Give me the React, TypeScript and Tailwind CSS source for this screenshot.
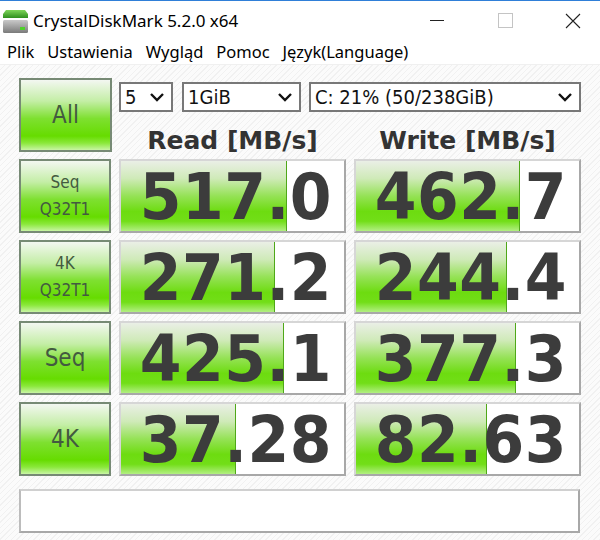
const readRows = [
  { label: ["Seq", "Q32T1"], read: "517.0", readBar: 166, write: "462.7", writeBar: 164 },
  { label: ["4K", "Q32T1"], read: "271.2", readBar: 154, write: "244.4", writeBar: 151 },
  { label: ["Seq"], read: "425.1", readBar: 163, write: "377.3", writeBar: 160 },
  { label: ["4K"], read: "37.28", readBar: 115, write: "82.63", writeBar: 131 },
]

const cond = "font-['DejaVu_Sans_Condensed','DejaVu_Sans',sans-serif] [font-stretch:condensed]"

function DriveIcon() {
  return (
    <svg width="25" height="23" viewBox="0 0 25 23">
      <defs>
        <linearGradient id="lid" x1="0" y1="0" x2="0" y2="1">
          <stop offset="0" stopColor="#7fd65a" />
          <stop offset="1" stopColor="#2f8f1e" />
        </linearGradient>
        <linearGradient id="box" x1="0" y1="0" x2="0" y2="1">
          <stop offset="0" stopColor="#c9c9c9" />
          <stop offset="1" stopColor="#7a7a7a" />
        </linearGradient>
      </defs>
      <path d="M3 0 H22 L25 4 V8 H0 V4 Z" fill="url(#lid)" />
      <rect x="0" y="10" width="25" height="13" rx="1.5" fill="url(#box)" />
      <rect x="17" y="17" width="5" height="3" fill="#4fd02a" />
    </svg>
  )
}

function Chevron() {
  return (
    <svg width="16" height="10" viewBox="0 0 16 10" className="shrink-0">
      <polyline points="2,2 8,8 14,2" fill="none" stroke="#111" strokeWidth="2.4" />
    </svg>
  )
}

function Select({ value, className }: { value: string; className: string }) {
  return (
    <div
      className={`flex h-[30px] items-center justify-between border-2 border-[#787878] bg-white pl-[4px] pr-[6px] text-[20px] text-[#111] ${cond} ${className}`}
    >
      <span className="leading-none">{value}</span>
      <Chevron />
    </div>
  )
}

function GreenButton({ lines }: { lines: string[] }) {
  const big = lines.length === 1
  return (
    <div className="flex h-[74px] flex-col items-center justify-center border-2 border-[#778a75] bg-[linear-gradient(180deg,#f3f7f1_0%,#c4eea6_30%,#7ee030_55%,#66dc00_80%,#8ae83a_90%,#c8f5a4_100%)]">
      {lines.map((l) => (
        <span
          key={l}
          className={`${cond} text-[#435a40] ${big ? "text-[24px] leading-[28px]" : "text-[17px] leading-[27px]"}`}
        >
          {l}
        </span>
      ))}
    </div>
  )
}

function ResultCell({ value, bar }: { value: string; bar: number }) {
  return (
    <div className="relative flex h-[74px] items-center justify-end overflow-hidden border-2 border-t-[#d6d6d6] border-l-[#d6d6d6] border-r-[#a8a8a8] border-b-[#a8a8a8] bg-white pr-[12px]">
      <div
        className="absolute inset-y-0 left-0 border-r border-[#4fa818] bg-[linear-gradient(180deg,#eaefe6_0%,#cfeab8_25%,#95e256_50%,#6ddc10_72%,#72de18_86%,#b2ef82_100%)]"
        style={{ width: bar }}
      />
      <span className="relative inline-block scale-y-[1.08] font-['DejaVu_Sans',sans-serif] text-[60px] font-bold leading-none tracking-[0.5px] text-[#3c3c3c]">
        {value}
      </span>
    </div>
  )
}

export default function App() {
  return (
    <div className="flex h-[540px] w-[600px] flex-col overflow-hidden bg-white">
      <div className="flex h-[40px] shrink-0 items-center border-t border-[#2f7fd8] bg-white">
        <div className="ml-[3px] mt-[1px]">
          <DriveIcon />
        </div>
        <span className="ml-[5px] font-['Noto_Sans',sans-serif] text-[17px] text-black">
          CrystalDiskMark 5.2.0 x64
        </span>
        <div className="ml-auto flex items-center">
          <div className="flex h-[30px] w-[46px] items-center justify-center">
            <div className="h-px w-[14px] bg-[#222]" />
          </div>
          <div className="ml-[22px] flex h-[30px] w-[46px] items-center justify-center">
            <div className="h-[15px] w-[15px] border border-[#c4c4c4]" />
          </div>
          <div className="ml-[22px] mr-[4px] flex h-[30px] w-[46px] items-center justify-center">
            <svg width="16" height="16" viewBox="0 0 16 16">
              <path d="M1 1 L15 15 M15 1 L1 15" stroke="#222" strokeWidth="1.1" />
            </svg>
          </div>
        </div>
      </div>

      <div className="flex h-[25px] shrink-0 items-center gap-[13px] border-b border-[#f0f0f0] pl-[7px] font-['Noto_Sans',sans-serif] text-[16.5px] text-black">
        <span>Plik</span>
        <span>Ustawienia</span>
        <span>Wygląd</span>
        <span>Pomoc</span>
        <span>Język(Language)</span>
      </div>

      <div className="flex-1 bg-[repeating-linear-gradient(135deg,#fbfbfb_0px,#fbfbfb_3px,#f1f1f1_3px,#f1f1f1_4px)] pl-[19px] pr-[20px] pt-[13px]">
        <div className="grid grid-cols-[92px_227px_227px] gap-x-[8px] gap-y-[7px]">
          <div className="mr-[-1px]">
            <GreenButton lines={["All"]} />
          </div>
          <div className="col-span-2 flex h-[74px] flex-col">
            <div className="mt-[4px] flex gap-[9px]">
              <Select value="5" className="w-[54px]" />
              <Select value="1GiB" className="w-[119px]" />
              <Select value="C: 21% (50/238GiB)" className="w-[272px] ml-[-1px]" />
            </div>
            <div className="grid flex-1 grid-cols-2 gap-x-[8px] pt-[10px]">
              <div className="text-center font-['DejaVu_Sans',sans-serif] text-[25px] font-bold text-[#333]">
                Read [MB/s]
              </div>
              <div className="text-center font-['DejaVu_Sans',sans-serif] text-[25px] font-bold text-[#333]">
                Write [MB/s]
              </div>
            </div>
          </div>

          {readRows.map((r) => (
            <div key={r.read} className="contents">
              <GreenButton lines={r.label} />
              <ResultCell value={r.read} bar={r.readBar} />
              <ResultCell value={r.write} bar={r.writeBar} />
            </div>
          ))}
        </div>

        <div className="mt-[13px] h-[44px] border-2 border-t-[#d0d0d0] border-l-[#bcbcbc] border-r-[#a8a8a8] border-b-[#a8a8a8] bg-white" />
      </div>
    </div>
  )
}
